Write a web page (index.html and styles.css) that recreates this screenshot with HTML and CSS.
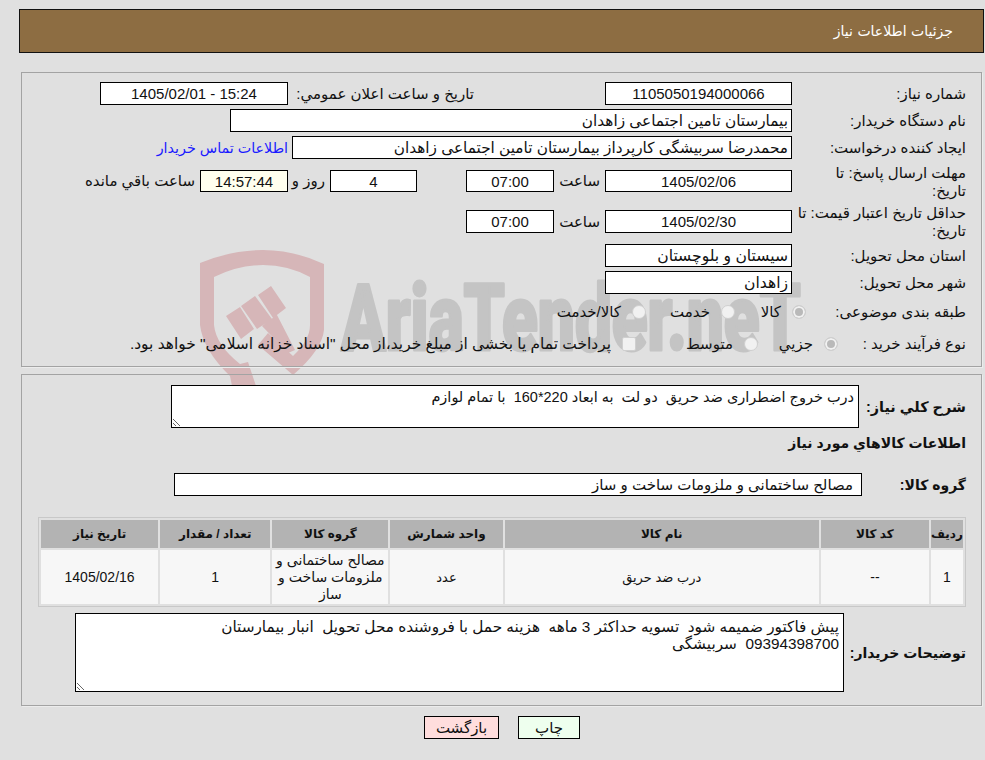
FILE: index.html
```html
<!DOCTYPE html>
<html lang="fa" dir="rtl">
<head>
<meta charset="utf-8">
<title>جزئیات اطلاعات نیاز</title>
<link rel="stylesheet" href="styles.css">
</head>
<body>
<svg class="watermark" width="985" height="400" viewBox="0 0 985 400" aria-hidden="true">
  <path class="wm-red" fill-rule="evenodd" d="M200 263Q232 250 263 250T324 264V330Q322 350 293 375L258 345L268 333L293 356Q310 340 310 325V277Q288 265 263 265T214 277V325Q216 345 240 364L248 362L256 386H232L230 376Q203 350 200 325Z"/>
  <path class="wm-red" d="M226 316L240 307L254 329L241 339ZM241 306L255 296L272 319L257 329ZM258 295L271 286L286 308L273 318ZM270 320L277 315L295 350L288 353L262 326Z"/>
  <text class="wm-text" x="341" y="350" textLength="460" lengthAdjust="spacingAndGlyphs" dir="ltr">AriaTender.neT</text>
</svg>

<header class="title-bar"><h1>جزئیات اطلاعات نیاز</h1></header>

<section class="panel panel-top">
  <div class="row h23">
    <div class="label">شماره نیاز:</div>
    <input class="box w187 mid" readonly value="1105050194000066">
    <div class="text announce">تاریخ و ساعت اعلان عمومي:</div>
    <input class="box w188 mid" readonly value="1405/02/01 - 15:24" dir="ltr">
  </div>
  <div class="row h23 gap4">
    <div class="label">نام دستگاه خریدار:</div>
    <input class="box w562" readonly value="بیمارستان تامین اجتماعی زاهدان">
  </div>
  <div class="row h23 gap4">
    <div class="label">ایجاد کننده درخواست:</div>
    <input class="box w500" readonly value="محمدرضا سربیشگی کارپرداز بیمارستان تامین اجتماعی زاهدان">
    <a class="contact" href="#">اطلاعات تماس خریدار</a>
  </div>
  <div class="row h36 gap4">
    <div class="label two-line">مهلت ارسال پاسخ: تا<br>تاریخ:</div>
    <input class="box w187 h22 mid" readonly value="1405/02/06">
    <div class="text hour">ساعت</div>
    <input class="box w88 h22 mid" readonly value="07:00">
    <input class="box w87 h22 mid days" readonly value="4">
    <div class="text day-word">روز و</div>
    <input class="box w88 h22 mid clock" readonly value="14:57:44">
    <div class="text remain">ساعت باقي مانده</div>
  </div>
  <div class="row h37 gap4">
    <div class="label two-line">حداقل تاریخ اعتبار قیمت: تا<br>تاریخ:</div>
    <input class="box w187 mid" readonly value="1405/02/30">
    <div class="text hour">ساعت</div>
    <input class="box w88 mid" readonly value="07:00">
  </div>
  <div class="row h23 gap4">
    <div class="label">استان محل تحویل:</div>
    <input class="box w187 place" readonly value="سیستان و بلوچستان">
  </div>
  <div class="row h23 gap4">
    <div class="label">شهر محل تحویل:</div>
    <input class="box w187 place" readonly value="زاهدان">
  </div>
  <div class="row choice-row subject">
    <div class="label">طبقه بندی موضوعی:</div>
    <label class="choice c71"><input type="radio" name="s" checked disabled><span>کالا</span></label>
    <label class="choice c89"><input type="radio" name="s" disabled><span>خدمت</span></label>
    <label class="choice"><input type="radio" name="s" disabled><span>کالا/خدمت</span></label>
  </div>
  <div class="row choice-row process">
    <div class="label">نوع فرآیند خرید :</div>
    <label class="choice c80"><input type="radio" name="p" checked disabled><span>جزیي</span></label>
    <label class="choice c122"><input type="radio" name="p" disabled><span>متوسط</span></label>
    <label class="choice pay"><input class="check" type="checkbox" disabled><span>پرداخت تمام یا بخشی از مبلغ خرید،از محل "اسناد خزانه اسلامی" خواهد بود.</span></label>
  </div>
</section>

<section class="panel panel-bottom">
  <div class="row desc-row">
    <div class="label strong lab-desc">شرح کلي نیاز:</div>
    <textarea class="area area-desc" readonly>درب خروج اضطراری ضد حریق  دو لت  به ابعاد 220*160  با تمام لوازم</textarea>
  </div>
  <h2 class="goods-title">اطلاعات کالاهاي مورد نیاز</h2>
  <div class="row group-row">
    <div class="label strong lab-group">گروه کالا:</div>
    <input class="box w688 group-box" readonly value="مصالح ساختمانی و ملزومات ساخت و ساز">
  </div>
  <table class="goods">
    <thead>
      <tr>
        <th class="c-idx">ردیف</th><th class="c-code">کد کالا</th><th class="c-name">نام کالا</th><th class="c-unit">واحد شمارش</th><th class="c-group">گروه کالا</th><th class="c-qty">تعداد / مقدار</th><th class="c-date">تاریخ نیاز</th>
      </tr>
    </thead>
    <tbody>
      <tr>
        <td class="cell-num">1</td><td class="cell-num">--</td><td>درب ضد حریق</td><td>عدد</td><td class="cell-group">مصالح ساختمانی و ملزومات ساخت و ساز</td><td class="cell-num">1</td><td class="cell-num">1405/02/16</td>
      </tr>
    </tbody>
  </table>
  <div class="row notes-row">
    <div class="label strong lab-notes">توضیحات خریدار:</div>
    <textarea class="area area-notes" readonly>پیش فاکتور ضمیمه شود  تسویه حداکثر 3 ماهه  هزینه حمل با فروشنده محل تحویل  انبار بیمارستان
09394398700  سربیشگی</textarea>
  </div>
</section>

<div class="actions">
  <button class="btn print" type="button">چاپ</button>
  <button class="btn back" type="button">بازگشت</button>
</div>
</body>
</html>
```
FILE: styles.css
```css
* { box-sizing: border-box; }
html, body { margin: 0; padding: 0; }
body {
  position: relative;
  width: 985px;
  height: 760px;
  overflow: hidden;
  background: #e0e0e0;
  color: #111;
  font: 15px/18px "Liberation Sans", "DejaVu Sans", sans-serif;
  padding-top: 9px;
}
.watermark { position: absolute; left: 0; top: 0; direction: ltr; }
.wm-red { fill: #d6b6b8; }
.wm-text { fill: #c4c4c4; stroke: #c4c4c4; stroke-width: 3; stroke-linejoin: round; font: 900 92px Roboto, sans-serif; }

.title-bar {
  position: relative;
  height: 44px;
  margin: 0 1px 0 19px;
  padding: 0 30px;
  display: flex;
  align-items: center;
  background: #8d6d42;
  border: 1px solid #111;
}
.title-bar h1 { margin: 0; font-size: 14px; font-weight: normal; color: #fff; font-family: "DejaVu Sans", sans-serif; }

.panel {
  position: relative;
  margin: 0 3px 0 21px;
  padding-right: 15px;
  border: 1px solid #a3a3a3;
  box-shadow: 1px 1px 0 #ececec;
}
.panel-top { height: 295px; margin-top: 19px; padding-top: 9px; }
.panel-bottom { height: 332px; margin-top: 7px; padding-top: 10px; }

.row { display: flex; align-items: center; }
.h23 { height: 23px; }
.h36 { height: 36px; }
.h37 { height: 37px; }
.gap4 { margin-top: 4px; }
.label { width: 174px; flex: none; white-space: nowrap; }
.two-line { padding-top: 1px; }
.strong { font-weight: bold; font-size: 14px; }
.text { flex: none; white-space: nowrap; }

.box {
  flex: none;
  height: 23px;
  padding: 0 3px;
  border: 1px solid #000;
  border-radius: 0;
  outline: none;
  background: #fff;
  color: #111;
  font: 15.3px "Liberation Sans", "DejaVu Sans", sans-serif;
  text-align: right;
}
.mid { text-align: center; font-size: 15px; }
.place { font-size: 15.6px; }
.h22 { height: 22px; }
.w87 { width: 87px; }
.w88 { width: 88px; }
.w187 { width: 187px; }
.w188 { width: 188px; }
.w500 { width: 500px; }
.w562 { width: 562px; }
.w688 { width: 688px; }

.announce { width: 181px; margin-right: 131px; margin-left: 5px; }
.contact { margin-right: 4px; font-size: 14.3px; color: #1a1aff; text-decoration: none; white-space: nowrap; }
.hour { width: 42px; margin: 0 5px 0 4px; }
.days { margin-right: 49px; }
.day-word { width: 28px; margin: 0 5px 0 9px; }
.clock { background: #ffffee; }
.remain { margin-right: 5px; }

.choice-row { height: 28px; }
.subject { margin-top: 4px; }
.subject .label { width: 160px; }
.process { margin-top: 4px; }
.process .label { width: 128px; }
.choice { display: flex; align-items: center; gap: 11px; flex: none; white-space: nowrap; }
.c71 { width: 71px; }
.c89 { width: 89px; }
.c80 { width: 80px; }
.c122 { width: 122px; }
.pay { font-size: 15.45px; }
.choice input {
  appearance: none;
  flex: none;
  width: 14px;
  height: 14px;
  margin: 0;
  border: 1px solid #cfcfcf;
  border-radius: 50%;
  background: #f1f1f1;
}
.choice input:checked { background: #b9b9b9; box-shadow: inset 0 0 0 2px #f1f1f1; }
.choice input.check { border-radius: 2px; }

.area {
  flex: none;
  display: block;
  padding: 3px 4px;
  border: 1px solid #000;
  border-radius: 0;
  outline: none;
  background: #fff;
  color: #111;
  font: 14.5px/17px "Liberation Sans", "DejaVu Sans", sans-serif;
}
.desc-row { height: 43px; }
.lab-desc { width: 107px; font-size: 14.4px; }
.area-desc { width: 688px; height: 43px; }
.goods-title { margin: 6px 0 0; height: 18px; font-size: 14px; line-height: 18px; font-weight: bold; }
.group-row { height: 23px; margin-top: 21px; }
.lab-group { width: 104px; }
.group-box { padding-right: 8px; font-size: 15px; }

.goods {
  width: 928px;
  height: 90px;
  margin: 21px 0 0;
  border: 1px solid #c8c8c8;
  border-spacing: 2px;
  table-layout: fixed;
  font-size: 13px;
}
.goods th {
  height: 28px;
  padding: 0;
  background: #b3b3b3;
  font-size: 12px;
  font-weight: bold;
}
.goods td {
  height: 54px;
  padding: 0 2px;
  background: #f7f7f7;
  text-align: center;
  line-height: 17px;
}
.goods td.cell-num { font-size: 14px; }
.goods td.cell-group { font-size: 14px; }
.c-idx { width: 32px; }
.c-code { width: 108px; }
.c-name { width: 314px; }
.c-unit { width: 112px; }
.c-group { width: 116px; }
.c-qty { width: 110px; }
.c-date { width: 117px; }

.notes-row { height: 79px; margin-top: 6px; }
.lab-notes { width: 122px; }
.area-notes { width: 769px; height: 79px; padding-top: 4px; font-size: 15.3px; }

.actions { display: flex; margin: 10px 405px 0 0; gap: 19px; }
.btn {
  height: 23px;
  padding: 0;
  border: 1px solid #000;
  border-radius: 0;
  color: #111;
  font: 15px "Liberation Sans", "DejaVu Sans", sans-serif;
}
.print { width: 62px; background: #eeffee; }
.back { width: 75px; background: #ffdddd; }
```
